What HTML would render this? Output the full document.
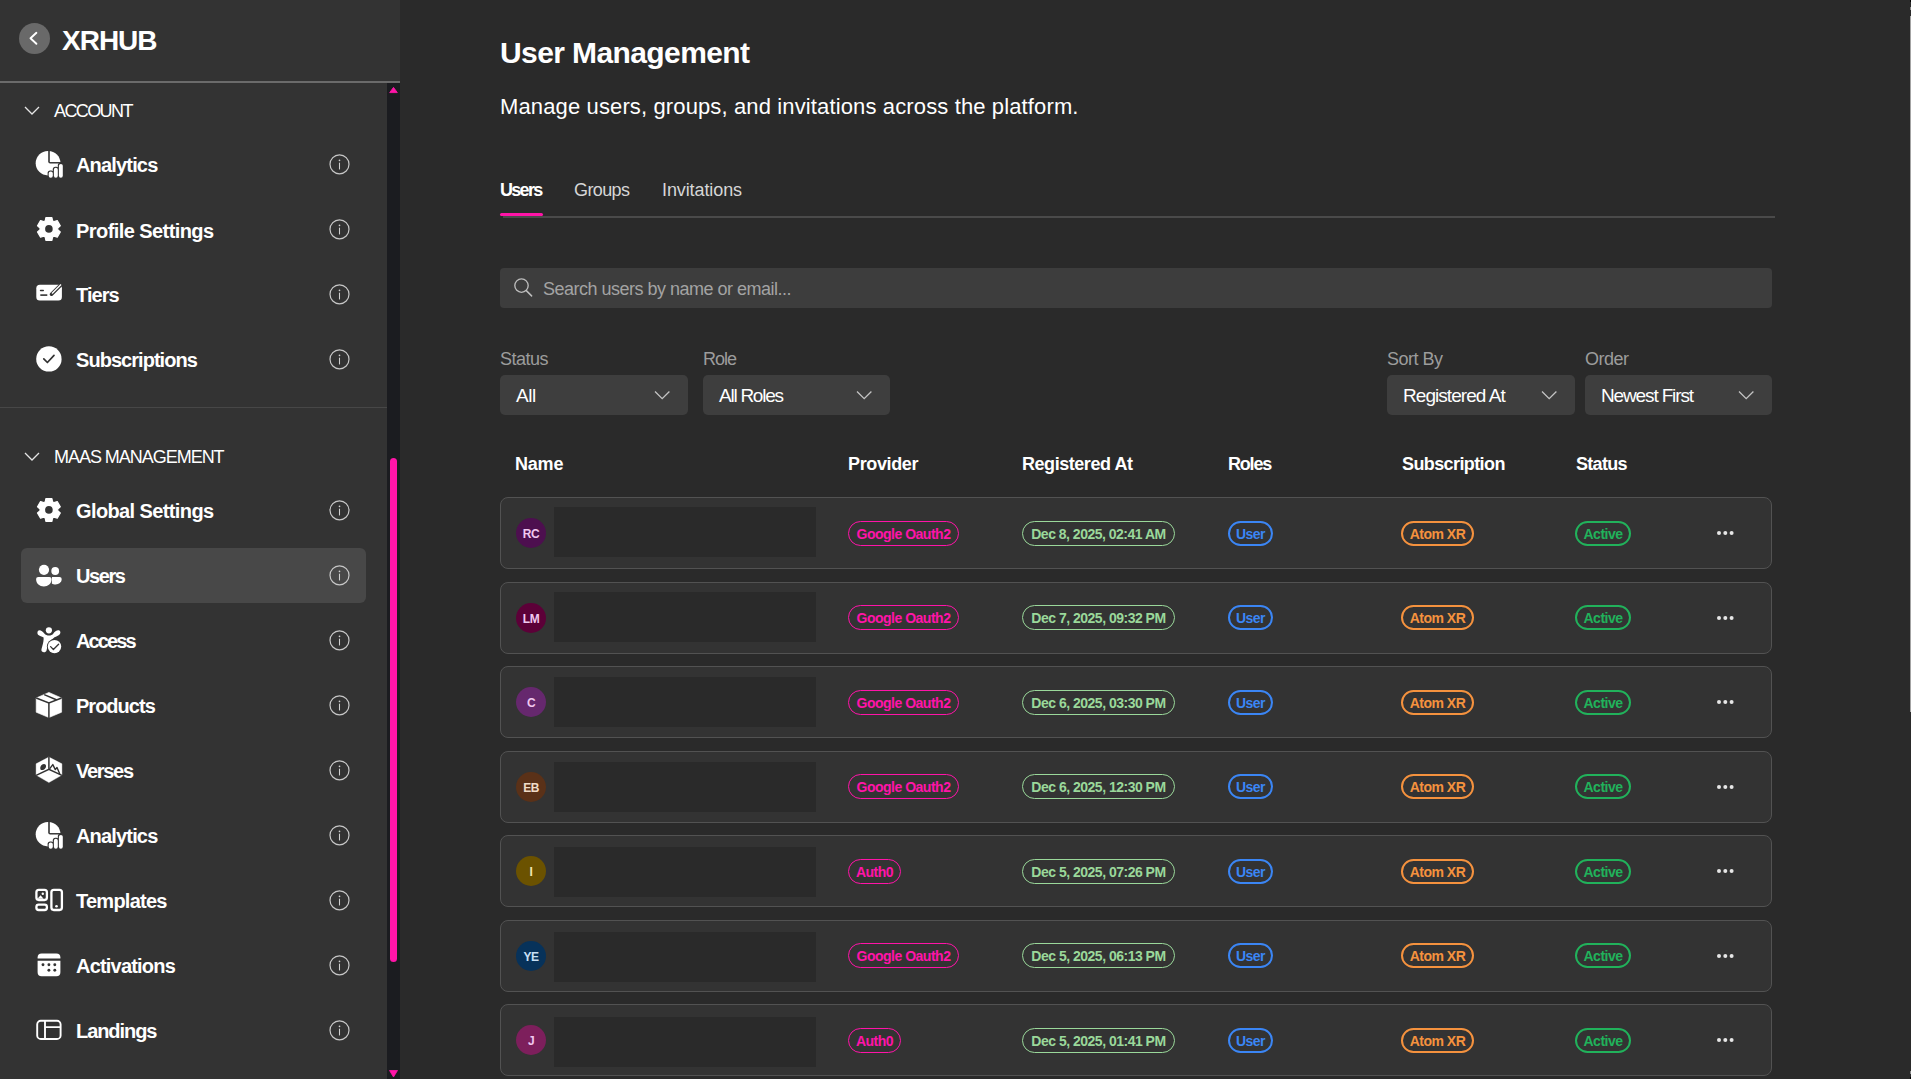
<!DOCTYPE html>
<html><head><meta charset="utf-8"><style>
html,body{margin:0;padding:0;width:1911px;height:1079px;overflow:hidden;background:#2a2a2a;}
body{position:relative;font-family:"Liberation Sans",sans-serif;}
.a{position:absolute;}
.t{position:absolute;white-space:nowrap;}
</style></head><body>
<div class="a" style="left:0px;top:0px;width:400px;height:1079px;background:#333333;"></div>
<div class="a" style="left:0px;top:81px;width:400px;height:2px;background:#6b6b6b;"></div>
<div class="a" style="left:19px;top:23px;width:31px;height:31px;background:#696969;border-radius:16px;"></div>
<svg class="a" style="left:19px;top:23px" width="31" height="31" viewBox="0 0 31 31"><path d="M17.4 9.8 L11.5 15.3 L17.4 20.8" fill="none" stroke="#fff" stroke-width="1.9" stroke-linecap="round" stroke-linejoin="round"/></svg>
<div class="t" style="left:62px;top:27.10px;font-size:28px;line-height:28px;font-weight:700;color:#fff;letter-spacing:-1px;">XRHUB</div>
<div class="a" style="left:387px;top:83px;width:13px;height:996px;background:#1b1c20;"></div>
<svg class="a" style="left:387px;top:83px" width="13" height="14" viewBox="0 0 13 14"><path d="M6.5 4.4 L10.3 9.6 L2.7 9.6 Z" fill="#ff14a8" stroke="#ff14a8" stroke-width="0.9" stroke-linejoin="round"/></svg>
<div class="a" style="left:390px;top:458px;width:7px;height:504px;background:#ff14a8;border-radius:3.5px;"></div>
<svg class="a" style="left:387px;top:1066px" width="13" height="13" viewBox="0 0 13 13"><path d="M2.5 4.5 L10.5 4.5 L6.5 11 Z" fill="#ff14a8" stroke="#ff14a8" stroke-width="0.8" stroke-linejoin="round"/></svg>
<svg class="a" style="left:24px;top:106px" width="16" height="10" viewBox="0 0 16 10"><path d="M1 1 L8 8 L15 1" fill="none" stroke="#e6e6e6" stroke-width="1.3"/></svg>
<div class="t" style="left:54px;top:101.76px;font-size:18px;line-height:18px;font-weight:400;color:#fff;letter-spacing:-1.6px;">ACCOUNT</div>
<div class="a" style="left:0px;top:407px;width:387px;height:1px;background:#474747;"></div>
<svg class="a" style="left:24px;top:452px" width="16" height="10" viewBox="0 0 16 10"><path d="M1 1 L8 8 L15 1" fill="none" stroke="#e6e6e6" stroke-width="1.3"/></svg>
<div class="t" style="left:54px;top:447.76px;font-size:18px;line-height:18px;font-weight:400;color:#fff;letter-spacing:-1.03px;">MAAS MANAGEMENT</div>
<div class="a" style="left:21px;top:548px;width:345px;height:55px;background:#484848;border-radius:6px;"></div>
<svg class="a" style="left:30px;top:145px" width="40" height="40" viewBox="0 0 40 40"><defs><mask id="mA165"><rect width="40" height="40" fill="#fff"/>
<path d="M18.2 0 V16.5 a2 2 0 0 0 2 2 H40 V0Z" fill="#000"/>
<rect x="17.6" y="25.4" width="6.3" height="10" rx="2.6" fill="#000"/>
<rect x="22.8" y="21.7" width="6.1" height="14" rx="2.6" fill="#000"/>
<rect x="27.8" y="17.8" width="7" height="18" rx="2.6" fill="#000"/></mask>
<mask id="mB165"><rect width="40" height="40" fill="#fff"/><rect x="0" y="17.05" width="40" height="30" fill="#000"/><rect x="0" y="0" width="19.8" height="40" fill="#000"/></mask></defs>
<circle cx="17.9" cy="18.2" r="12.2" fill="#ffffff" mask="url(#mA165)"/>
<circle cx="18.4" cy="17.9" r="12.0" fill="#ffffff" mask="url(#mB165)"/>
<rect x="18.7" y="26.5" width="4.1" height="6.3" rx="2" fill="#ffffff"/>
<rect x="23.9" y="22.8" width="3.9" height="10" rx="1.95" fill="#ffffff"/>
<rect x="28.9" y="18.9" width="3.9" height="13.9" rx="1.95" fill="#ffffff"/></svg>
<div class="t" style="left:76px;top:155.07px;font-size:20px;line-height:20px;font-weight:700;color:#fff;letter-spacing:-0.83px;">Analytics</div>
<svg class="a" style="left:329px;top:154px" width="21" height="21" viewBox="0 0 21 21"><circle cx="10.5" cy="10.3" r="9.5" fill="none" stroke="#c8c8c8" stroke-width="1.2"/><circle cx="10.5" cy="6.3" r="0.85" fill="#cfcfcf"/><line x1="10.5" y1="9" x2="10.5" y2="14.9" stroke="#cfcfcf" stroke-width="1.05" stroke-linecap="round"/></svg>
<svg class="a" style="left:30px;top:210px" width="40" height="40" viewBox="0 0 40 40"><path d="M15.27 10.77 L15.87 7.50 L21.93 7.50 L22.53 10.77 L24.12 11.69 L27.26 10.57 L30.29 15.83 L27.75 17.98 L27.75 19.82 L30.29 21.97 L27.26 27.23 L24.12 26.11 L22.53 27.03 L21.93 30.30 L15.87 30.30 L15.27 27.03 L13.68 26.11 L10.54 27.23 L7.51 21.97 L10.05 19.82 L10.05 17.98 L7.51 15.83 L10.54 10.57 L13.68 11.69Z" fill="#ffffff" stroke="#ffffff" stroke-width="1.2" stroke-linejoin="round"/>
<circle cx="18.9" cy="18.9" r="3.8" fill="#333333"/></svg>
<div class="t" style="left:76px;top:220.57px;font-size:20px;line-height:20px;font-weight:700;color:#fff;letter-spacing:-0.57px;">Profile Settings</div>
<svg class="a" style="left:329px;top:219px" width="21" height="21" viewBox="0 0 21 21"><circle cx="10.5" cy="10.3" r="9.5" fill="none" stroke="#c8c8c8" stroke-width="1.2"/><circle cx="10.5" cy="6.3" r="0.85" fill="#cfcfcf"/><line x1="10.5" y1="9" x2="10.5" y2="14.9" stroke="#cfcfcf" stroke-width="1.05" stroke-linecap="round"/></svg>
<svg class="a" style="left:30px;top:275px" width="40" height="40" viewBox="0 0 40 40"><rect x="6.3" y="9.8" width="25.6" height="15.8" rx="3.5" fill="#ffffff"/>
<line x1="10.5" y1="15.5" x2="13.3" y2="15.5" stroke="#333333" stroke-width="1.4" stroke-linecap="round"/>
<line x1="10.3" y1="20.1" x2="17.3" y2="20.1" stroke="#333333" stroke-width="1.6"/>
<line x1="21.5" y1="19.2" x2="32.5" y2="8.2" stroke="#333333" stroke-width="3.6" stroke-linecap="round"/>
<line x1="22" y1="18.6" x2="31" y2="9.6" stroke="#ffffff" stroke-width="1.4"/></svg>
<div class="t" style="left:76px;top:285.07px;font-size:20px;line-height:20px;font-weight:700;color:#fff;letter-spacing:-0.97px;">Tiers</div>
<svg class="a" style="left:329px;top:284px" width="21" height="21" viewBox="0 0 21 21"><circle cx="10.5" cy="10.3" r="9.5" fill="none" stroke="#c8c8c8" stroke-width="1.2"/><circle cx="10.5" cy="6.3" r="0.85" fill="#cfcfcf"/><line x1="10.5" y1="9" x2="10.5" y2="14.9" stroke="#cfcfcf" stroke-width="1.05" stroke-linecap="round"/></svg>
<svg class="a" style="left:30px;top:340px" width="40" height="40" viewBox="0 0 40 40"><circle cx="18.9" cy="18.9" r="12.7" fill="#ffffff"/>
<path d="M13.8 18.8 L17.4 22.5 L24 15.4" fill="none" stroke="#333333" stroke-width="1.7" stroke-linecap="round" stroke-linejoin="round"/></svg>
<div class="t" style="left:76px;top:350.07px;font-size:20px;line-height:20px;font-weight:700;color:#fff;letter-spacing:-0.96px;">Subscriptions</div>
<svg class="a" style="left:329px;top:349px" width="21" height="21" viewBox="0 0 21 21"><circle cx="10.5" cy="10.3" r="9.5" fill="none" stroke="#c8c8c8" stroke-width="1.2"/><circle cx="10.5" cy="6.3" r="0.85" fill="#cfcfcf"/><line x1="10.5" y1="9" x2="10.5" y2="14.9" stroke="#cfcfcf" stroke-width="1.05" stroke-linecap="round"/></svg>
<svg class="a" style="left:30px;top:491px" width="40" height="40" viewBox="0 0 40 40"><path d="M15.27 10.77 L15.87 7.50 L21.93 7.50 L22.53 10.77 L24.12 11.69 L27.26 10.57 L30.29 15.83 L27.75 17.98 L27.75 19.82 L30.29 21.97 L27.26 27.23 L24.12 26.11 L22.53 27.03 L21.93 30.30 L15.87 30.30 L15.27 27.03 L13.68 26.11 L10.54 27.23 L7.51 21.97 L10.05 19.82 L10.05 17.98 L7.51 15.83 L10.54 10.57 L13.68 11.69Z" fill="#ffffff" stroke="#ffffff" stroke-width="1.2" stroke-linejoin="round"/>
<circle cx="18.9" cy="18.9" r="3.8" fill="#333333"/></svg>
<div class="t" style="left:76px;top:501.07px;font-size:20px;line-height:20px;font-weight:700;color:#fff;letter-spacing:-0.61px;">Global Settings</div>
<svg class="a" style="left:329px;top:500px" width="21" height="21" viewBox="0 0 21 21"><circle cx="10.5" cy="10.3" r="9.5" fill="none" stroke="#c8c8c8" stroke-width="1.2"/><circle cx="10.5" cy="6.3" r="0.85" fill="#cfcfcf"/><line x1="10.5" y1="9" x2="10.5" y2="14.9" stroke="#cfcfcf" stroke-width="1.05" stroke-linecap="round"/></svg>
<svg class="a" style="left:30px;top:556px" width="40" height="40" viewBox="0 0 40 40"><circle cx="14" cy="13.8" r="5.1" fill="#ffffff"/>
<circle cx="25.2" cy="15" r="3.9" fill="#ffffff"/>
<path d="M22 20.9 H29.5 a2.2 2.2 0 0 1 2.2 2.2 C31.7 26.3 28.8 28.5 25.6 28.5 C24 28.5 22.8 28.1 21.9 27.5 Z" fill="#ffffff"/>
<path d="M8.3 20.9 H19.4 a2.2 2.2 0 0 1 2.2 2.2 C21.6 27.8 18 30.6 13.85 30.6 C9.7 30.6 6.1 27.8 6.1 23.1 a2.2 2.2 0 0 1 2.2 -2.2 Z" fill="#ffffff" stroke="#484848" stroke-width="0"/></svg>
<div class="t" style="left:76px;top:566.07px;font-size:20px;line-height:20px;font-weight:700;color:#fff;letter-spacing:-1.4px;">Users</div>
<svg class="a" style="left:329px;top:565px" width="21" height="21" viewBox="0 0 21 21"><circle cx="10.5" cy="10.3" r="9.5" fill="none" stroke="#c8c8c8" stroke-width="1.2"/><circle cx="10.5" cy="6.3" r="0.85" fill="#cfcfcf"/><line x1="10.5" y1="9" x2="10.5" y2="14.9" stroke="#cfcfcf" stroke-width="1.05" stroke-linecap="round"/></svg>
<svg class="a" style="left:30px;top:621px" width="40" height="40" viewBox="0 0 40 40"><circle cx="18.9" cy="9.3" r="3.1" fill="#ffffff"/>
<path d="M9.5 9.2 C11 9.2 13 10.6 14.3 12.6 C15.5 14 17.2 14.6 18.9 14.6 C20.8 14.6 22.4 13.8 23.4 12.4 C24.4 10.6 26.5 9.2 28.2 9.2 C30.1 9.2 31.2 11.4 29.8 13.2 C28.5 14.5 26.2 15.4 24.5 16.3 C22.6 17.6 20.5 19.8 19.3 22 C17.8 24.5 17 27 16.6 29.2 C16 31.6 13.4 31.8 12 30.6 C11 29.5 11.4 28 12.2 25.4 C13.2 22 13.8 19.5 13.6 16.6 C12.5 15.6 10.6 15.2 8.8 14.2 C6.6 13 7.2 9.2 9.5 9.2Z" fill="#ffffff"/>
<circle cx="24.5" cy="25.6" r="7.6" fill="#333333"/>
<circle cx="24.5" cy="25.6" r="6.7" fill="#ffffff"/>
<path d="M20.6 25.6 L23.4 28.5 L28.6 23.2" fill="none" stroke="#333333" stroke-width="1.3" stroke-linecap="round" stroke-linejoin="round"/></svg>
<div class="t" style="left:76px;top:631.07px;font-size:20px;line-height:20px;font-weight:700;color:#fff;letter-spacing:-1.9px;">Access</div>
<svg class="a" style="left:329px;top:630px" width="21" height="21" viewBox="0 0 21 21"><circle cx="10.5" cy="10.3" r="9.5" fill="none" stroke="#c8c8c8" stroke-width="1.2"/><circle cx="10.5" cy="6.3" r="0.85" fill="#cfcfcf"/><line x1="10.5" y1="9" x2="10.5" y2="14.9" stroke="#cfcfcf" stroke-width="1.05" stroke-linecap="round"/></svg>
<svg class="a" style="left:30px;top:686px" width="40" height="40" viewBox="0 0 40 40"><path d="M18.9 6.4 L31.6 12 V26.2 L18.9 31.6 L6.2 26.2 V12 Z" fill="#ffffff" stroke="#ffffff" stroke-width="0.6" stroke-linejoin="round"/>
<path d="M6.2 12 L18.9 16.9 L31.6 12 M18.9 16.9 V32 M14.2 8.6 L26.3 13.8" fill="none" stroke="#333333" stroke-width="1.5"/></svg>
<div class="t" style="left:76px;top:696.07px;font-size:20px;line-height:20px;font-weight:700;color:#fff;letter-spacing:-0.99px;">Products</div>
<svg class="a" style="left:329px;top:695px" width="21" height="21" viewBox="0 0 21 21"><circle cx="10.5" cy="10.3" r="9.5" fill="none" stroke="#c8c8c8" stroke-width="1.2"/><circle cx="10.5" cy="6.3" r="0.85" fill="#cfcfcf"/><line x1="10.5" y1="9" x2="10.5" y2="14.9" stroke="#cfcfcf" stroke-width="1.05" stroke-linecap="round"/></svg>
<svg class="a" style="left:30px;top:751px" width="40" height="40" viewBox="0 0 40 40"><path d="M18.9 6.1 L31.9 12.8 V24.1 L18.9 31.5 L6.1 24.1 V12.8 Z" fill="#ffffff" stroke="#ffffff" stroke-width="0.4" stroke-linejoin="round"/>
<path d="M18.9 6.1 V18.4 M6.1 24.4 L18.9 18.4 L31.9 24.4" fill="none" stroke="#333333" stroke-width="1.5"/>
<path d="M10.3 17.4 C10.1 15.5 11.6 13 13.8 12.9 C15.8 12.9 16.5 14.6 15.8 16.4 C15.2 18 13.3 19 11.9 19.1 C10.9 19.1 10.4 18.4 10.3 17.4Z" fill="#333333"/>
<path d="M19.6 17.8 L22.8 13.6 L25.3 18.6 L27 16.5 L29.8 23" fill="none" stroke="#333333" stroke-width="1.4" stroke-linejoin="round"/></svg>
<div class="t" style="left:76px;top:761.07px;font-size:20px;line-height:20px;font-weight:700;color:#fff;letter-spacing:-1.3px;">Verses</div>
<svg class="a" style="left:329px;top:760px" width="21" height="21" viewBox="0 0 21 21"><circle cx="10.5" cy="10.3" r="9.5" fill="none" stroke="#c8c8c8" stroke-width="1.2"/><circle cx="10.5" cy="6.3" r="0.85" fill="#cfcfcf"/><line x1="10.5" y1="9" x2="10.5" y2="14.9" stroke="#cfcfcf" stroke-width="1.05" stroke-linecap="round"/></svg>
<svg class="a" style="left:30px;top:816px" width="40" height="40" viewBox="0 0 40 40"><defs><mask id="mA836"><rect width="40" height="40" fill="#fff"/>
<path d="M18.2 0 V16.5 a2 2 0 0 0 2 2 H40 V0Z" fill="#000"/>
<rect x="17.6" y="25.4" width="6.3" height="10" rx="2.6" fill="#000"/>
<rect x="22.8" y="21.7" width="6.1" height="14" rx="2.6" fill="#000"/>
<rect x="27.8" y="17.8" width="7" height="18" rx="2.6" fill="#000"/></mask>
<mask id="mB836"><rect width="40" height="40" fill="#fff"/><rect x="0" y="17.05" width="40" height="30" fill="#000"/><rect x="0" y="0" width="19.8" height="40" fill="#000"/></mask></defs>
<circle cx="17.9" cy="18.2" r="12.2" fill="#ffffff" mask="url(#mA836)"/>
<circle cx="18.4" cy="17.9" r="12.0" fill="#ffffff" mask="url(#mB836)"/>
<rect x="18.7" y="26.5" width="4.1" height="6.3" rx="2" fill="#ffffff"/>
<rect x="23.9" y="22.8" width="3.9" height="10" rx="1.95" fill="#ffffff"/>
<rect x="28.9" y="18.9" width="3.9" height="13.9" rx="1.95" fill="#ffffff"/></svg>
<div class="t" style="left:76px;top:826.07px;font-size:20px;line-height:20px;font-weight:700;color:#fff;letter-spacing:-0.83px;">Analytics</div>
<svg class="a" style="left:329px;top:825px" width="21" height="21" viewBox="0 0 21 21"><circle cx="10.5" cy="10.3" r="9.5" fill="none" stroke="#c8c8c8" stroke-width="1.2"/><circle cx="10.5" cy="6.3" r="0.85" fill="#cfcfcf"/><line x1="10.5" y1="9" x2="10.5" y2="14.9" stroke="#cfcfcf" stroke-width="1.05" stroke-linecap="round"/></svg>
<svg class="a" style="left:30px;top:881px" width="40" height="40" viewBox="0 0 40 40"><rect x="6.4" y="8.8" width="10.5" height="10.2" rx="2.4" fill="none" stroke="#ffffff" stroke-width="2.3"/>
<path d="M7.5 17.8 L10.6 14.3 L13.5 17.8 Z" fill="#ffffff"/>
<circle cx="12.8" cy="12.8" r="1.2" fill="#ffffff"/>
<rect x="6.4" y="23.7" width="10.5" height="5.3" rx="2.3" fill="none" stroke="#ffffff" stroke-width="2.3"/>
<rect x="21.4" y="8.8" width="10.5" height="20.2" rx="2.4" fill="none" stroke="#ffffff" stroke-width="2.3"/>
<circle cx="26.5" cy="25.2" r="1.3" fill="#ffffff"/></svg>
<div class="t" style="left:76px;top:891.07px;font-size:20px;line-height:20px;font-weight:700;color:#fff;letter-spacing:-0.75px;">Templates</div>
<svg class="a" style="left:329px;top:890px" width="21" height="21" viewBox="0 0 21 21"><circle cx="10.5" cy="10.3" r="9.5" fill="none" stroke="#c8c8c8" stroke-width="1.2"/><circle cx="10.5" cy="6.3" r="0.85" fill="#cfcfcf"/><line x1="10.5" y1="9" x2="10.5" y2="14.9" stroke="#cfcfcf" stroke-width="1.05" stroke-linecap="round"/></svg>
<svg class="a" style="left:30px;top:946px" width="40" height="40" viewBox="0 0 40 40"><path d="M7.6 12.6 V11.6 a4 4 0 0 1 4 -4 H26.4 a4 4 0 0 1 4 4 V12.6 Z" fill="#ffffff"/>
<path d="M7.6 14.8 H30.4 V26.2 a4 4 0 0 1 -4 4 H11.6 a4 4 0 0 1 -4 -4 Z" fill="#ffffff"/>
<circle cx="13" cy="18.7" r="1.45" fill="#333333"/><circle cx="18.9" cy="18.7" r="1.45" fill="#333333"/><circle cx="24.8" cy="18.7" r="1.45" fill="#333333"/>
<circle cx="18.9" cy="24.3" r="1.45" fill="#333333"/><circle cx="24.8" cy="24.3" r="1.45" fill="#333333"/></svg>
<div class="t" style="left:76px;top:956.07px;font-size:20px;line-height:20px;font-weight:700;color:#fff;letter-spacing:-0.8px;">Activations</div>
<svg class="a" style="left:329px;top:955px" width="21" height="21" viewBox="0 0 21 21"><circle cx="10.5" cy="10.3" r="9.5" fill="none" stroke="#c8c8c8" stroke-width="1.2"/><circle cx="10.5" cy="6.3" r="0.85" fill="#cfcfcf"/><line x1="10.5" y1="9" x2="10.5" y2="14.9" stroke="#cfcfcf" stroke-width="1.05" stroke-linecap="round"/></svg>
<svg class="a" style="left:30px;top:1011px" width="40" height="40" viewBox="0 0 40 40"><rect x="7.2" y="9.8" width="23.4" height="18.2" rx="3.6" fill="none" stroke="#ffffff" stroke-width="1.9"/>
<path d="M15 9.8 V28 M15 16.1 H30.6" fill="none" stroke="#ffffff" stroke-width="1.9"/></svg>
<div class="t" style="left:76px;top:1021.07px;font-size:20px;line-height:20px;font-weight:700;color:#fff;letter-spacing:-1.07px;">Landings</div>
<svg class="a" style="left:329px;top:1020px" width="21" height="21" viewBox="0 0 21 21"><circle cx="10.5" cy="10.3" r="9.5" fill="none" stroke="#c8c8c8" stroke-width="1.2"/><circle cx="10.5" cy="6.3" r="0.85" fill="#cfcfcf"/><line x1="10.5" y1="9" x2="10.5" y2="14.9" stroke="#cfcfcf" stroke-width="1.05" stroke-linecap="round"/></svg>
<div class="t" style="left:500px;top:38.10px;font-size:30px;line-height:30px;font-weight:700;color:#fff;letter-spacing:-0.6px;">User Management</div>
<div class="t" style="left:500px;top:95.88px;font-size:22px;line-height:22px;font-weight:400;color:#fff;letter-spacing:0.13px;">Manage users, groups, and invitations across the platform.</div>
<div class="t" style="left:500px;top:180.76px;font-size:18px;line-height:18px;font-weight:700;color:#fff;letter-spacing:-1.7px;">Users</div>
<div class="t" style="left:574px;top:180.76px;font-size:18px;line-height:18px;font-weight:400;color:#d6d6d6;letter-spacing:-0.6px;">Groups</div>
<div class="t" style="left:662px;top:180.76px;font-size:18px;line-height:18px;font-weight:400;color:#d6d6d6;letter-spacing:-0.1px;">Invitations</div>
<div class="a" style="left:503px;top:216px;width:1272px;height:2px;background:#4a4a4a;"></div>
<div class="a" style="left:500px;top:213px;width:43px;height:3px;background:#ff14a8;border-radius:1.5px;"></div>
<div class="a" style="left:500px;top:268px;width:1272px;height:40px;background:#3d3d3d;border-radius:4px;"></div>
<svg class="a" style="left:510px;top:275px" width="26" height="26" viewBox="0 0 26 26"><circle cx="11.5" cy="10.6" r="6.7" fill="none" stroke="#bdbdbd" stroke-width="1.35"/><line x1="16.3" y1="15.6" x2="21.6" y2="20.9" stroke="#bdbdbd" stroke-width="1.5" stroke-linecap="round"/></svg>
<div class="t" style="left:543px;top:279.76px;font-size:18px;line-height:18px;font-weight:400;color:#a3a3a3;letter-spacing:-0.5px;">Search users by name or email...</div>
<div class="t" style="left:500px;top:349.76px;font-size:18px;line-height:18px;font-weight:400;color:#9c9c9c;letter-spacing:-0.5px;">Status</div>
<div class="a" style="left:500px;top:375px;width:188px;height:40px;background:#3e3e3e;border-radius:5px;"></div>
<div class="t" style="left:516px;top:385.92px;font-size:19px;line-height:19px;font-weight:400;color:#fff;letter-spacing:-0.5px;">All</div>
<svg class="a" style="left:653.7px;top:390px" width="17" height="11" viewBox="0 0 17 11"><path d="M1 1.5 L8.2 8.7 L15.4 1.5" fill="none" stroke="#c4c4c4" stroke-width="1.3"/></svg>
<div class="t" style="left:703px;top:349.76px;font-size:18px;line-height:18px;font-weight:400;color:#9c9c9c;letter-spacing:-1.0px;">Role</div>
<div class="a" style="left:703px;top:375px;width:187px;height:40px;background:#3e3e3e;border-radius:5px;"></div>
<div class="t" style="left:719px;top:385.92px;font-size:19px;line-height:19px;font-weight:400;color:#fff;letter-spacing:-1.25px;">All Roles</div>
<svg class="a" style="left:855.7px;top:390px" width="17" height="11" viewBox="0 0 17 11"><path d="M1 1.5 L8.2 8.7 L15.4 1.5" fill="none" stroke="#c4c4c4" stroke-width="1.3"/></svg>
<div class="t" style="left:1387px;top:349.76px;font-size:18px;line-height:18px;font-weight:400;color:#9c9c9c;letter-spacing:-0.5px;">Sort By</div>
<div class="a" style="left:1387px;top:375px;width:188px;height:40px;background:#3e3e3e;border-radius:5px;"></div>
<div class="t" style="left:1403px;top:385.92px;font-size:19px;line-height:19px;font-weight:400;color:#fff;letter-spacing:-0.95px;">Registered At</div>
<svg class="a" style="left:1540.7px;top:390px" width="17" height="11" viewBox="0 0 17 11"><path d="M1 1.5 L8.2 8.7 L15.4 1.5" fill="none" stroke="#c4c4c4" stroke-width="1.3"/></svg>
<div class="t" style="left:1585px;top:349.76px;font-size:18px;line-height:18px;font-weight:400;color:#9c9c9c;letter-spacing:-0.5px;">Order</div>
<div class="a" style="left:1585px;top:375px;width:187px;height:40px;background:#3e3e3e;border-radius:5px;"></div>
<div class="t" style="left:1601px;top:385.92px;font-size:19px;line-height:19px;font-weight:400;color:#fff;letter-spacing:-1.14px;">Newest First</div>
<svg class="a" style="left:1737.7px;top:390px" width="17" height="11" viewBox="0 0 17 11"><path d="M1 1.5 L8.2 8.7 L15.4 1.5" fill="none" stroke="#c4c4c4" stroke-width="1.3"/></svg>
<div class="t" style="left:515px;top:454.76px;font-size:18px;line-height:18px;font-weight:700;color:#fff;letter-spacing:-0.2px;">Name</div>
<div class="t" style="left:848px;top:454.76px;font-size:18px;line-height:18px;font-weight:700;color:#fff;letter-spacing:-0.37px;">Provider</div>
<div class="t" style="left:1022px;top:454.76px;font-size:18px;line-height:18px;font-weight:700;color:#fff;letter-spacing:-0.45px;">Registered At</div>
<div class="t" style="left:1228px;top:454.76px;font-size:18px;line-height:18px;font-weight:700;color:#fff;letter-spacing:-1.2px;">Roles</div>
<div class="t" style="left:1402px;top:454.76px;font-size:18px;line-height:18px;font-weight:700;color:#fff;letter-spacing:-0.6px;">Subscription</div>
<div class="t" style="left:1576px;top:454.76px;font-size:18px;line-height:18px;font-weight:700;color:#fff;letter-spacing:-0.7px;">Status</div>
<div class="a" style="left:500px;top:497.0px;width:1272px;height:72px;box-sizing:border-box;background:#333333;border:1px solid #525252;border-radius:8px;"></div>
<div class="a" style="left:516px;top:518.0px;width:30px;height:30px;border-radius:15px;background:#4d0f4f;color:#f0c8f0;font-size:12px;font-weight:700;line-height:32px;text-align:center;letter-spacing:-0.5px">RC</div>
<div class="a" style="left:554px;top:507.2px;width:262px;height:49.5px;background:#2a2a2a;"></div>
<div class="a" style="left:848px;top:520.5px;width:111px;height:25px;box-sizing:border-box;border:1.2px solid #ff14a8;border-radius:12.5px;"></div>
<div class="t" style="left:848px;top:521.7px;width:111px;height:25px;line-height:25px;text-align:center;font-size:14px;font-weight:700;color:#ff14a8;letter-spacing:-0.5px">Google Oauth2</div>
<div class="a" style="left:1022px;top:520.5px;width:153px;height:25px;box-sizing:border-box;border:1.2px solid #9ad89a;border-radius:12.5px;"></div>
<div class="t" style="left:1022px;top:521.7px;width:153px;height:25px;line-height:25px;text-align:center;font-size:14px;font-weight:700;color:#9ad89a;letter-spacing:-0.5px">Dec 8, 2025, 02:41 AM</div>
<div class="a" style="left:1228px;top:520.5px;width:45px;height:25px;box-sizing:border-box;border:2px solid #3b86f5;border-radius:12.5px;"></div>
<div class="t" style="left:1228px;top:521.7px;width:45px;height:25px;line-height:25px;text-align:center;font-size:14px;font-weight:700;color:#3b86f5;letter-spacing:-0.5px">User</div>
<div class="a" style="left:1401px;top:520.5px;width:73px;height:25px;box-sizing:border-box;border:2px solid #f5923e;border-radius:12.5px;"></div>
<div class="t" style="left:1401px;top:521.7px;width:73px;height:25px;line-height:25px;text-align:center;font-size:14px;font-weight:700;color:#f5923e;letter-spacing:-0.5px">Atom XR</div>
<div class="a" style="left:1575px;top:520.5px;width:56px;height:25px;box-sizing:border-box;border:2px solid #21b25b;border-radius:12.5px;"></div>
<div class="t" style="left:1575px;top:521.7px;width:56px;height:25px;line-height:25px;text-align:center;font-size:14px;font-weight:700;color:#21b25b;letter-spacing:-0.5px">Active</div>
<svg class="a" style="left:1715px;top:528.0px" width="22" height="10" viewBox="0 0 22 10"><circle cx="4" cy="5" r="2" fill="#e6e6e6"/><circle cx="10.3" cy="5" r="2" fill="#e6e6e6"/><circle cx="16.6" cy="5" r="2" fill="#e6e6e6"/></svg>
<div class="a" style="left:500px;top:581.5px;width:1272px;height:72px;box-sizing:border-box;background:#333333;border:1px solid #525252;border-radius:8px;"></div>
<div class="a" style="left:516px;top:602.5px;width:30px;height:30px;border-radius:15px;background:#5c0038;color:#f0c8f0;font-size:12px;font-weight:700;line-height:32px;text-align:center;letter-spacing:-0.5px">LM</div>
<div class="a" style="left:554px;top:592.2px;width:262px;height:49.5px;background:#2a2a2a;"></div>
<div class="a" style="left:848px;top:605.0px;width:111px;height:25px;box-sizing:border-box;border:1.2px solid #ff14a8;border-radius:12.5px;"></div>
<div class="t" style="left:848px;top:606.2px;width:111px;height:25px;line-height:25px;text-align:center;font-size:14px;font-weight:700;color:#ff14a8;letter-spacing:-0.5px">Google Oauth2</div>
<div class="a" style="left:1022px;top:605.0px;width:153px;height:25px;box-sizing:border-box;border:1.2px solid #9ad89a;border-radius:12.5px;"></div>
<div class="t" style="left:1022px;top:606.2px;width:153px;height:25px;line-height:25px;text-align:center;font-size:14px;font-weight:700;color:#9ad89a;letter-spacing:-0.5px">Dec 7, 2025, 09:32 PM</div>
<div class="a" style="left:1228px;top:605.0px;width:45px;height:25px;box-sizing:border-box;border:2px solid #3b86f5;border-radius:12.5px;"></div>
<div class="t" style="left:1228px;top:606.2px;width:45px;height:25px;line-height:25px;text-align:center;font-size:14px;font-weight:700;color:#3b86f5;letter-spacing:-0.5px">User</div>
<div class="a" style="left:1401px;top:605.0px;width:73px;height:25px;box-sizing:border-box;border:2px solid #f5923e;border-radius:12.5px;"></div>
<div class="t" style="left:1401px;top:606.2px;width:73px;height:25px;line-height:25px;text-align:center;font-size:14px;font-weight:700;color:#f5923e;letter-spacing:-0.5px">Atom XR</div>
<div class="a" style="left:1575px;top:605.0px;width:56px;height:25px;box-sizing:border-box;border:2px solid #21b25b;border-radius:12.5px;"></div>
<div class="t" style="left:1575px;top:606.2px;width:56px;height:25px;line-height:25px;text-align:center;font-size:14px;font-weight:700;color:#21b25b;letter-spacing:-0.5px">Active</div>
<svg class="a" style="left:1715px;top:612.5px" width="22" height="10" viewBox="0 0 22 10"><circle cx="4" cy="5" r="2" fill="#e6e6e6"/><circle cx="10.3" cy="5" r="2" fill="#e6e6e6"/><circle cx="16.6" cy="5" r="2" fill="#e6e6e6"/></svg>
<div class="a" style="left:500px;top:666.0px;width:1272px;height:72px;box-sizing:border-box;background:#333333;border:1px solid #525252;border-radius:8px;"></div>
<div class="a" style="left:516px;top:687.0px;width:30px;height:30px;border-radius:15px;background:#66286e;color:#f0c8f0;font-size:12px;font-weight:700;line-height:32px;text-align:center;letter-spacing:-0.5px">C</div>
<div class="a" style="left:554px;top:677.2px;width:262px;height:49.5px;background:#2a2a2a;"></div>
<div class="a" style="left:848px;top:689.5px;width:111px;height:25px;box-sizing:border-box;border:1.2px solid #ff14a8;border-radius:12.5px;"></div>
<div class="t" style="left:848px;top:690.7px;width:111px;height:25px;line-height:25px;text-align:center;font-size:14px;font-weight:700;color:#ff14a8;letter-spacing:-0.5px">Google Oauth2</div>
<div class="a" style="left:1022px;top:689.5px;width:153px;height:25px;box-sizing:border-box;border:1.2px solid #9ad89a;border-radius:12.5px;"></div>
<div class="t" style="left:1022px;top:690.7px;width:153px;height:25px;line-height:25px;text-align:center;font-size:14px;font-weight:700;color:#9ad89a;letter-spacing:-0.5px">Dec 6, 2025, 03:30 PM</div>
<div class="a" style="left:1228px;top:689.5px;width:45px;height:25px;box-sizing:border-box;border:2px solid #3b86f5;border-radius:12.5px;"></div>
<div class="t" style="left:1228px;top:690.7px;width:45px;height:25px;line-height:25px;text-align:center;font-size:14px;font-weight:700;color:#3b86f5;letter-spacing:-0.5px">User</div>
<div class="a" style="left:1401px;top:689.5px;width:73px;height:25px;box-sizing:border-box;border:2px solid #f5923e;border-radius:12.5px;"></div>
<div class="t" style="left:1401px;top:690.7px;width:73px;height:25px;line-height:25px;text-align:center;font-size:14px;font-weight:700;color:#f5923e;letter-spacing:-0.5px">Atom XR</div>
<div class="a" style="left:1575px;top:689.5px;width:56px;height:25px;box-sizing:border-box;border:2px solid #21b25b;border-radius:12.5px;"></div>
<div class="t" style="left:1575px;top:690.7px;width:56px;height:25px;line-height:25px;text-align:center;font-size:14px;font-weight:700;color:#21b25b;letter-spacing:-0.5px">Active</div>
<svg class="a" style="left:1715px;top:697.0px" width="22" height="10" viewBox="0 0 22 10"><circle cx="4" cy="5" r="2" fill="#e6e6e6"/><circle cx="10.3" cy="5" r="2" fill="#e6e6e6"/><circle cx="16.6" cy="5" r="2" fill="#e6e6e6"/></svg>
<div class="a" style="left:500px;top:750.5px;width:1272px;height:72px;box-sizing:border-box;background:#333333;border:1px solid #525252;border-radius:8px;"></div>
<div class="a" style="left:516px;top:771.5px;width:30px;height:30px;border-radius:15px;background:#5a3118;color:#f0dcc8;font-size:12px;font-weight:700;line-height:32px;text-align:center;letter-spacing:-0.5px">EB</div>
<div class="a" style="left:554px;top:762.2px;width:262px;height:49.5px;background:#2a2a2a;"></div>
<div class="a" style="left:848px;top:774.0px;width:111px;height:25px;box-sizing:border-box;border:1.2px solid #ff14a8;border-radius:12.5px;"></div>
<div class="t" style="left:848px;top:775.2px;width:111px;height:25px;line-height:25px;text-align:center;font-size:14px;font-weight:700;color:#ff14a8;letter-spacing:-0.5px">Google Oauth2</div>
<div class="a" style="left:1022px;top:774.0px;width:153px;height:25px;box-sizing:border-box;border:1.2px solid #9ad89a;border-radius:12.5px;"></div>
<div class="t" style="left:1022px;top:775.2px;width:153px;height:25px;line-height:25px;text-align:center;font-size:14px;font-weight:700;color:#9ad89a;letter-spacing:-0.5px">Dec 6, 2025, 12:30 PM</div>
<div class="a" style="left:1228px;top:774.0px;width:45px;height:25px;box-sizing:border-box;border:2px solid #3b86f5;border-radius:12.5px;"></div>
<div class="t" style="left:1228px;top:775.2px;width:45px;height:25px;line-height:25px;text-align:center;font-size:14px;font-weight:700;color:#3b86f5;letter-spacing:-0.5px">User</div>
<div class="a" style="left:1401px;top:774.0px;width:73px;height:25px;box-sizing:border-box;border:2px solid #f5923e;border-radius:12.5px;"></div>
<div class="t" style="left:1401px;top:775.2px;width:73px;height:25px;line-height:25px;text-align:center;font-size:14px;font-weight:700;color:#f5923e;letter-spacing:-0.5px">Atom XR</div>
<div class="a" style="left:1575px;top:774.0px;width:56px;height:25px;box-sizing:border-box;border:2px solid #21b25b;border-radius:12.5px;"></div>
<div class="t" style="left:1575px;top:775.2px;width:56px;height:25px;line-height:25px;text-align:center;font-size:14px;font-weight:700;color:#21b25b;letter-spacing:-0.5px">Active</div>
<svg class="a" style="left:1715px;top:781.5px" width="22" height="10" viewBox="0 0 22 10"><circle cx="4" cy="5" r="2" fill="#e6e6e6"/><circle cx="10.3" cy="5" r="2" fill="#e6e6e6"/><circle cx="16.6" cy="5" r="2" fill="#e6e6e6"/></svg>
<div class="a" style="left:500px;top:835.0px;width:1272px;height:72px;box-sizing:border-box;background:#333333;border:1px solid #525252;border-radius:8px;"></div>
<div class="a" style="left:516px;top:856.0px;width:30px;height:30px;border-radius:15px;background:#6b5200;color:#f5e6b0;font-size:12px;font-weight:700;line-height:32px;text-align:center;letter-spacing:-0.5px">I</div>
<div class="a" style="left:554px;top:847.2px;width:262px;height:49.5px;background:#2a2a2a;"></div>
<div class="a" style="left:848px;top:858.5px;width:53px;height:25px;box-sizing:border-box;border:1.2px solid #ff14a8;border-radius:12.5px;"></div>
<div class="t" style="left:848px;top:859.7px;width:53px;height:25px;line-height:25px;text-align:center;font-size:14px;font-weight:700;color:#ff14a8;letter-spacing:-0.5px">Auth0</div>
<div class="a" style="left:1022px;top:858.5px;width:153px;height:25px;box-sizing:border-box;border:1.2px solid #9ad89a;border-radius:12.5px;"></div>
<div class="t" style="left:1022px;top:859.7px;width:153px;height:25px;line-height:25px;text-align:center;font-size:14px;font-weight:700;color:#9ad89a;letter-spacing:-0.5px">Dec 5, 2025, 07:26 PM</div>
<div class="a" style="left:1228px;top:858.5px;width:45px;height:25px;box-sizing:border-box;border:2px solid #3b86f5;border-radius:12.5px;"></div>
<div class="t" style="left:1228px;top:859.7px;width:45px;height:25px;line-height:25px;text-align:center;font-size:14px;font-weight:700;color:#3b86f5;letter-spacing:-0.5px">User</div>
<div class="a" style="left:1401px;top:858.5px;width:73px;height:25px;box-sizing:border-box;border:2px solid #f5923e;border-radius:12.5px;"></div>
<div class="t" style="left:1401px;top:859.7px;width:73px;height:25px;line-height:25px;text-align:center;font-size:14px;font-weight:700;color:#f5923e;letter-spacing:-0.5px">Atom XR</div>
<div class="a" style="left:1575px;top:858.5px;width:56px;height:25px;box-sizing:border-box;border:2px solid #21b25b;border-radius:12.5px;"></div>
<div class="t" style="left:1575px;top:859.7px;width:56px;height:25px;line-height:25px;text-align:center;font-size:14px;font-weight:700;color:#21b25b;letter-spacing:-0.5px">Active</div>
<svg class="a" style="left:1715px;top:866.0px" width="22" height="10" viewBox="0 0 22 10"><circle cx="4" cy="5" r="2" fill="#e6e6e6"/><circle cx="10.3" cy="5" r="2" fill="#e6e6e6"/><circle cx="16.6" cy="5" r="2" fill="#e6e6e6"/></svg>
<div class="a" style="left:500px;top:919.5px;width:1272px;height:72px;box-sizing:border-box;background:#333333;border:1px solid #525252;border-radius:8px;"></div>
<div class="a" style="left:516px;top:940.5px;width:30px;height:30px;border-radius:15px;background:#07325a;color:#c8e0f5;font-size:12px;font-weight:700;line-height:32px;text-align:center;letter-spacing:-0.5px">YE</div>
<div class="a" style="left:554px;top:932.2px;width:262px;height:49.5px;background:#2a2a2a;"></div>
<div class="a" style="left:848px;top:943.0px;width:111px;height:25px;box-sizing:border-box;border:1.2px solid #ff14a8;border-radius:12.5px;"></div>
<div class="t" style="left:848px;top:944.2px;width:111px;height:25px;line-height:25px;text-align:center;font-size:14px;font-weight:700;color:#ff14a8;letter-spacing:-0.5px">Google Oauth2</div>
<div class="a" style="left:1022px;top:943.0px;width:153px;height:25px;box-sizing:border-box;border:1.2px solid #9ad89a;border-radius:12.5px;"></div>
<div class="t" style="left:1022px;top:944.2px;width:153px;height:25px;line-height:25px;text-align:center;font-size:14px;font-weight:700;color:#9ad89a;letter-spacing:-0.5px">Dec 5, 2025, 06:13 PM</div>
<div class="a" style="left:1228px;top:943.0px;width:45px;height:25px;box-sizing:border-box;border:2px solid #3b86f5;border-radius:12.5px;"></div>
<div class="t" style="left:1228px;top:944.2px;width:45px;height:25px;line-height:25px;text-align:center;font-size:14px;font-weight:700;color:#3b86f5;letter-spacing:-0.5px">User</div>
<div class="a" style="left:1401px;top:943.0px;width:73px;height:25px;box-sizing:border-box;border:2px solid #f5923e;border-radius:12.5px;"></div>
<div class="t" style="left:1401px;top:944.2px;width:73px;height:25px;line-height:25px;text-align:center;font-size:14px;font-weight:700;color:#f5923e;letter-spacing:-0.5px">Atom XR</div>
<div class="a" style="left:1575px;top:943.0px;width:56px;height:25px;box-sizing:border-box;border:2px solid #21b25b;border-radius:12.5px;"></div>
<div class="t" style="left:1575px;top:944.2px;width:56px;height:25px;line-height:25px;text-align:center;font-size:14px;font-weight:700;color:#21b25b;letter-spacing:-0.5px">Active</div>
<svg class="a" style="left:1715px;top:950.5px" width="22" height="10" viewBox="0 0 22 10"><circle cx="4" cy="5" r="2" fill="#e6e6e6"/><circle cx="10.3" cy="5" r="2" fill="#e6e6e6"/><circle cx="16.6" cy="5" r="2" fill="#e6e6e6"/></svg>
<div class="a" style="left:500px;top:1004.0px;width:1272px;height:72px;box-sizing:border-box;background:#333333;border:1px solid #525252;border-radius:8px;"></div>
<div class="a" style="left:516px;top:1025.0px;width:30px;height:30px;border-radius:15px;background:#7d1f5c;color:#f0c8f0;font-size:12px;font-weight:700;line-height:32px;text-align:center;letter-spacing:-0.5px">J</div>
<div class="a" style="left:554px;top:1017.2px;width:262px;height:49.5px;background:#2a2a2a;"></div>
<div class="a" style="left:848px;top:1027.5px;width:53px;height:25px;box-sizing:border-box;border:1.2px solid #ff14a8;border-radius:12.5px;"></div>
<div class="t" style="left:848px;top:1028.7px;width:53px;height:25px;line-height:25px;text-align:center;font-size:14px;font-weight:700;color:#ff14a8;letter-spacing:-0.5px">Auth0</div>
<div class="a" style="left:1022px;top:1027.5px;width:153px;height:25px;box-sizing:border-box;border:1.2px solid #9ad89a;border-radius:12.5px;"></div>
<div class="t" style="left:1022px;top:1028.7px;width:153px;height:25px;line-height:25px;text-align:center;font-size:14px;font-weight:700;color:#9ad89a;letter-spacing:-0.5px">Dec 5, 2025, 01:41 PM</div>
<div class="a" style="left:1228px;top:1027.5px;width:45px;height:25px;box-sizing:border-box;border:2px solid #3b86f5;border-radius:12.5px;"></div>
<div class="t" style="left:1228px;top:1028.7px;width:45px;height:25px;line-height:25px;text-align:center;font-size:14px;font-weight:700;color:#3b86f5;letter-spacing:-0.5px">User</div>
<div class="a" style="left:1401px;top:1027.5px;width:73px;height:25px;box-sizing:border-box;border:2px solid #f5923e;border-radius:12.5px;"></div>
<div class="t" style="left:1401px;top:1028.7px;width:73px;height:25px;line-height:25px;text-align:center;font-size:14px;font-weight:700;color:#f5923e;letter-spacing:-0.5px">Atom XR</div>
<div class="a" style="left:1575px;top:1027.5px;width:56px;height:25px;box-sizing:border-box;border:2px solid #21b25b;border-radius:12.5px;"></div>
<div class="t" style="left:1575px;top:1028.7px;width:56px;height:25px;line-height:25px;text-align:center;font-size:14px;font-weight:700;color:#21b25b;letter-spacing:-0.5px">Active</div>
<svg class="a" style="left:1715px;top:1035.0px" width="22" height="10" viewBox="0 0 22 10"><circle cx="4" cy="5" r="2" fill="#e6e6e6"/><circle cx="10.3" cy="5" r="2" fill="#e6e6e6"/><circle cx="16.6" cy="5" r="2" fill="#e6e6e6"/></svg>
<div class="a" style="left:1910px;top:16px;width:1px;height:696px;background:#a3a3a3;"></div>
<div class="a" style="left:1910px;top:7px;width:1px;height:3px;background:#8a8a8a;"></div>
<div class="a" style="left:1910px;top:1071px;width:1px;height:3px;background:#8a8a8a;"></div>
<div class="a" style="left:1910px;top:0px;width:1px;height:2px;background:#000;"></div>
<div class="a" style="left:1910px;top:1077px;width:1px;height:2px;background:#000;"></div>
</body></html>
